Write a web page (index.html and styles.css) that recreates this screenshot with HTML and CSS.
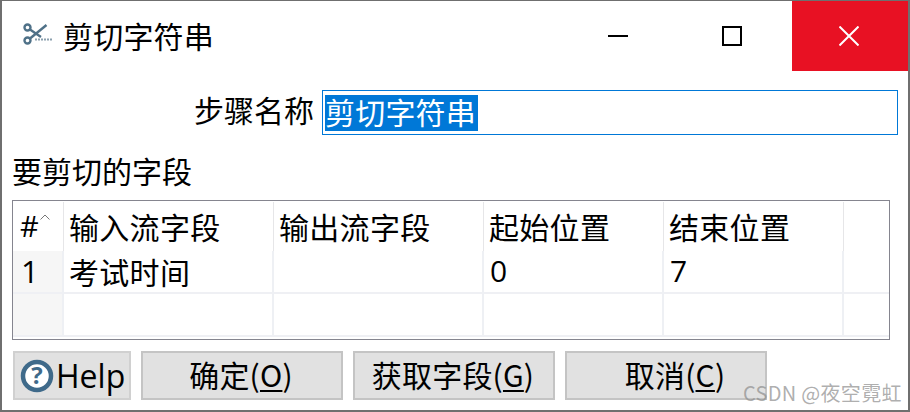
FILE: index.html
```html
<!DOCTYPE html>
<html lang="zh">
<head>
<meta charset="utf-8">
<title>剪切字符串</title>
<link rel="stylesheet" href="styles.css">
</head>
<body>
<div class="window">
  <header class="titlebar">
    <svg class="app-icon" width="32" height="30" viewBox="0 0 32 30">
      <g fill="none" stroke="#4f7188" stroke-width="2.4">
        <circle cx="5.5" cy="6.5" r="3"/>
        <circle cx="5.5" cy="19.5" r="3"/>
        <path d="M8 8.5 L19 16 M8 17.5 L24.5 4"/>
      </g>
      <path d="M13 18.5H31" stroke="#8ba0ae" stroke-width="2" stroke-dasharray="2 1"/>
    </svg>
    <span class="title">剪切字符串</span>
    <div class="controls">
      <div class="ctl min"><svg width="20" height="20" viewBox="0 0 20 20"><path d="M0 10H20" stroke="#000" stroke-width="2"/></svg></div>
      <div class="ctl max"><svg width="20" height="20" viewBox="0 0 20 20"><rect x="1" y="1" width="18" height="18" fill="none" stroke="#000" stroke-width="2"/></svg></div>
      <div class="ctl close"><svg width="20" height="20" viewBox="0 0 20 20"><path d="M0.5 0.5L19.5 19.5M19.5 0.5L0.5 19.5" stroke="#fff" stroke-width="2"/></svg></div>
    </div>
  </header>
  <div class="name-row">
    <label class="name-label">步骤名称</label>
    <div class="name-input"><span class="selected">剪切字符串</span></div>
  </div>
  <div class="section-label">要剪切的字段</div>
  <div class="table">
    <div class="c h num">#<svg class="sort" width="10" height="6" viewBox="0 0 10 6"><path d="M0.5 5.5L5 1L9.5 5.5" fill="none" stroke="#777" stroke-width="1"/></svg></div>
    <div class="c h">输入流字段</div>
    <div class="c h">输出流字段</div>
    <div class="c h">起始位置</div>
    <div class="c h">结束位置</div>
    <div class="c h last"></div>

    <div class="c r rownum">1</div>
    <div class="c r">考试时间</div>
    <div class="c r"></div>
    <div class="c r latin">0</div>
    <div class="c r latin">7</div>
    <div class="c r last"></div>

    <div class="c r rownum"></div>
    <div class="c r"></div>
    <div class="c r"></div>
    <div class="c r"></div>
    <div class="c r"></div>
    <div class="c r last"></div>
  </div>
  <div class="buttons">
    <button class="btn help">
      <svg width="34" height="34" viewBox="0 0 34 34"><circle cx="17" cy="17" r="14" fill="#fff" stroke="#3f6a8a" stroke-width="4.5"/><text x="17" y="25" text-anchor="middle" class="q">?</text></svg>
      <span>Help</span>
    </button>
    <button class="btn wide">确定(<u>O</u>)</button>
    <button class="btn wide">获取字段(<u>G</u>)</button>
    <button class="btn wide cancel">取消(<u>C</u>)</button>
  </div>
  <div class="watermark">CSDN @夜空霓虹</div>
</div>
</body>
</html>
```
FILE: styles.css
```css
* { box-sizing: border-box; }
html, body { margin: 0; padding: 0; }
body {
  width: 910px;
  height: 412px;
  overflow: hidden;
  background: #fff;
  font-family: "Noto Sans CJK SC", "Open Sans", sans-serif;
  color: #000;
}
.window {
  position: relative;
  width: 910px;
  height: 412px;
  border: 2px solid #6f6f6f;
  border-top-width: 1px;
  background: #fff;
  display: flex;
  flex-direction: column;
}
.titlebar {
  height: 70px;
  display: flex;
  align-items: center;
  flex: none;
}
.app-icon { margin-left: 20px; margin-bottom: 1px; flex: none; }
.title {
  margin-left: 9px;
  font-size: 30px;
  line-height: 40px;
  margin-bottom: 2px;
  letter-spacing: .2px;
}
.controls { margin-left: auto; display: flex; height: 70px; }
.ctl {
  height: 70px;
  display: flex;
  align-items: center;
  justify-content: center;
}
.min { width: 115px; padding-right: 3px; }
.max { width: 115px; padding-right: 5px; }
.close { width: 116px; background: #e81123; padding-right: 2px; }
.name-row {
  display: flex;
  align-items: center;
  margin-top: 19px;
  height: 45px;
  flex: none;
}
.name-label {
  margin-left: 192px;
  width: 128px;
  font-size: 30px;
  line-height: 40px;
  margin-top: -8px;
}
.name-input {
  width: 576px;
  height: 45px;
  border: 1px solid #0078d7;
  padding: 4px 0 0 2px;
}
.selected {
  display: block;
  width: 153px;
  height: 36px;
  background: #0078d7;
  color: #fff;
  font-size: 30px;
  line-height: 33px;
  letter-spacing: .2px;
}
.section-label {
  margin: 15px 0 0 10px;
  font-size: 30px;
  line-height: 40px;
  height: 43px;
  flex: none;
}
.table {
  margin: 7px 0 0 10px;
  width: 878px;
  height: 140px;
  border: 1px solid #85858f;
  display: grid;
  grid-template-columns: 51px 210px 210px 180px 180px 45px;
  grid-template-rows: 50px 43px 43px;
  padding-bottom: 2px;
  font-size: 30px;
  letter-spacing: .3px;
  flex: none;
}
.c {
  line-height: 40px;
  padding-left: 5px;
  border-right: 1px solid #eef0f4;
  white-space: nowrap;
}
.h { padding-top: 4px; border-right-color: #e6e6e8; margin-top: 1px; }
.r { border-bottom: 2px solid #eff0f4; border-right-width: 2px; }
.latin { font-family: "Open Sans", sans-serif; padding-left: 6px; }
.num { font-family: "Open Sans", sans-serif; font-size: 29px; padding-left: 7px; padding-top: 4px; position: relative; }
.sort { position: absolute; left: 27px; top: 12px; }
.rownum { background: #f6f6f6; font-family: "Open Sans", sans-serif; font-size: 31px; padding-left: 8px; }
.last { border-right: 0; }
.buttons {
  display: flex;
  gap: 10px;
  margin: 11px 0 0 11px;
  flex: none;
}
.btn {
  height: 49px;
  width: 202px;
  padding: 0 0 4px;
  border: 2px solid #c4c4c4;
  background: #e1e1e1;
  font-family: "Open Sans", "Noto Sans CJK SC", sans-serif;
  font-size: 30px;
  line-height: 40px;
  color: #000;
  display: flex;
  align-items: center;
  justify-content: center;
}
.wide { font-family: "Noto Sans CJK SC", sans-serif; font-size: 30px; letter-spacing: .2px; padding-right: 2px; }
.cancel { padding-left: 18px; padding-right: 0; }
.btn u { text-underline-offset: 3px; text-decoration-thickness: 2px; }
.help {
  width: 118px;
  justify-content: flex-start;
  padding: 0 0 0 5px;
  gap: 2px;
  border-color: #d0d0d0;
  font-size: 32px;
}
.q { font: bold 24px "Open Sans", sans-serif; fill: #3f6a8a; }
.watermark {
  position: absolute;
  left: 741px;
  top: 378px;
  font-size: 20px;
  letter-spacing: .3px;
  line-height: 27px;
  color: rgba(140,140,140,.7);
  white-space: nowrap;
}
```
